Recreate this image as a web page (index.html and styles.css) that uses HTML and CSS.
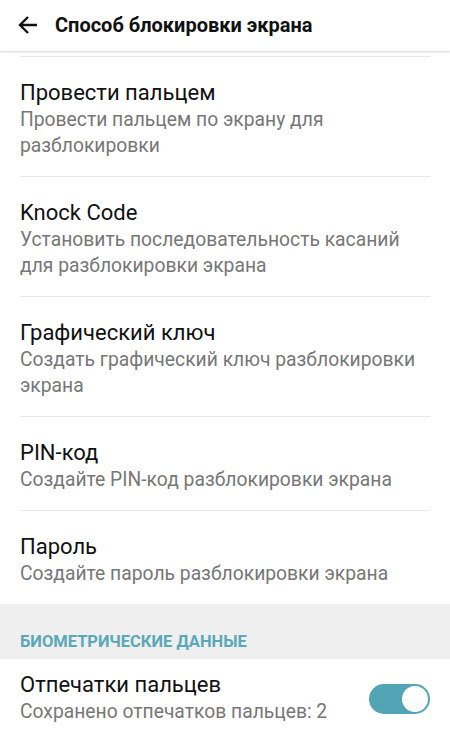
FILE: index.html
```html
<!DOCTYPE html>
<html lang="ru">
<head>
  <meta charset="UTF-8">
  <meta name="viewport" content="width=device-width, initial-scale=1.0">
  <title>Способ блокировки экрана</title>
  <link rel="stylesheet" href="styles.css">
</head>
<body>
  <!-- Top bar -->
  <div class="app-bar">
    <svg class="back" width="22" height="22" viewBox="0 0 22 22">
      <path d="M20 11H3M11 3l-8 8 8 8" fill="none" stroke="#111" stroke-width="2.4"/>
    </svg>
    <h1>Способ блокировки экрана</h1>
  </div>

  <div class="list">
    <div class="scroll-edge"></div>

    <div class="item">
      <div class="item-title">Провести пальцем</div>
      <div class="item-sub">Провести пальцем по экрану для разблокировки</div>
    </div>

    <div class="item">
      <div class="item-title">Knock Code</div>
      <div class="item-sub">Установить последовательность касаний для разблокировки экрана</div>
    </div>

    <div class="item">
      <div class="item-title">Графический ключ</div>
      <div class="item-sub">Создать графический ключ разблокировки экрана</div>
    </div>

    <div class="item">
      <div class="item-title">PIN-код</div>
      <div class="item-sub">Создайте PIN-код разблокировки экрана</div>
    </div>

    <div class="item">
      <div class="item-title">Пароль</div>
      <div class="item-sub">Создайте пароль разблокировки экрана</div>
    </div>

    <!-- Biometrics -->
    <div class="section-head">БИОМЕТРИЧЕСКИЕ ДАННЫЕ</div>

    <div class="item item-switch">
      <div class="item-text">
        <div class="item-title">Отпечатки пальцев</div>
        <div class="item-sub">Сохранено отпечатков пальцев: 2</div>
      </div>
      <div class="switch on"><span class="knob"></span></div>
    </div>
  </div>
</body>
</html>
```

FILE: styles.css
```css
body {
  font-family: Roboto, "Noto Sans", sans-serif;
  margin: 0;
  padding: 0;
  background-color: #ffffff;
  color: #111;
  overflow: hidden;
}
.app-bar {
  height: 51px;
  display: flex;
  align-items: center;
  padding-left: 17px;
  background: #ffffff;
  box-shadow: 0 1px 2px rgba(0, 0, 0, 0.18);
  position: relative;
  z-index: 1;
}
.app-bar .back {
  margin-top: -2px;
}
.app-bar h1 {
  margin: -2px 0 0 16px;
  font-size: 20px;
  font-weight: bold;
  color: #111;
}
.scroll-edge {
  height: 5px;
}
.item {
  margin: 0 20px;
  padding: 22px 0 17px;
  border-top: 1px solid #e9e9e9;
}
.item-title {
  font-size: 22px;
  line-height: 28px;
  color: #111;
}
.item-sub {
  font-size: 19.3px;
  line-height: 26px;
  color: #777;
}
.section-head {
  background: #efefef;
  padding: 28px 20px 7px;
  font-size: 16.5px;
  line-height: 20px;
  font-weight: bold;
  color: #5aa8b8;
}
.item-switch {
  border-top: none;
  padding-top: 12px;
  display: flex;
  align-items: center;
  justify-content: space-between;
}
.switch {
  width: 61px;
  height: 30px;
  border-radius: 15px;
  background: #52a5b5;
  position: relative;
  margin-top: 2px;
}
.switch .knob {
  position: absolute;
  top: 2px;
  right: 2px;
  width: 26px;
  height: 26px;
  border-radius: 50%;
  background: #ffffff;
}
```
